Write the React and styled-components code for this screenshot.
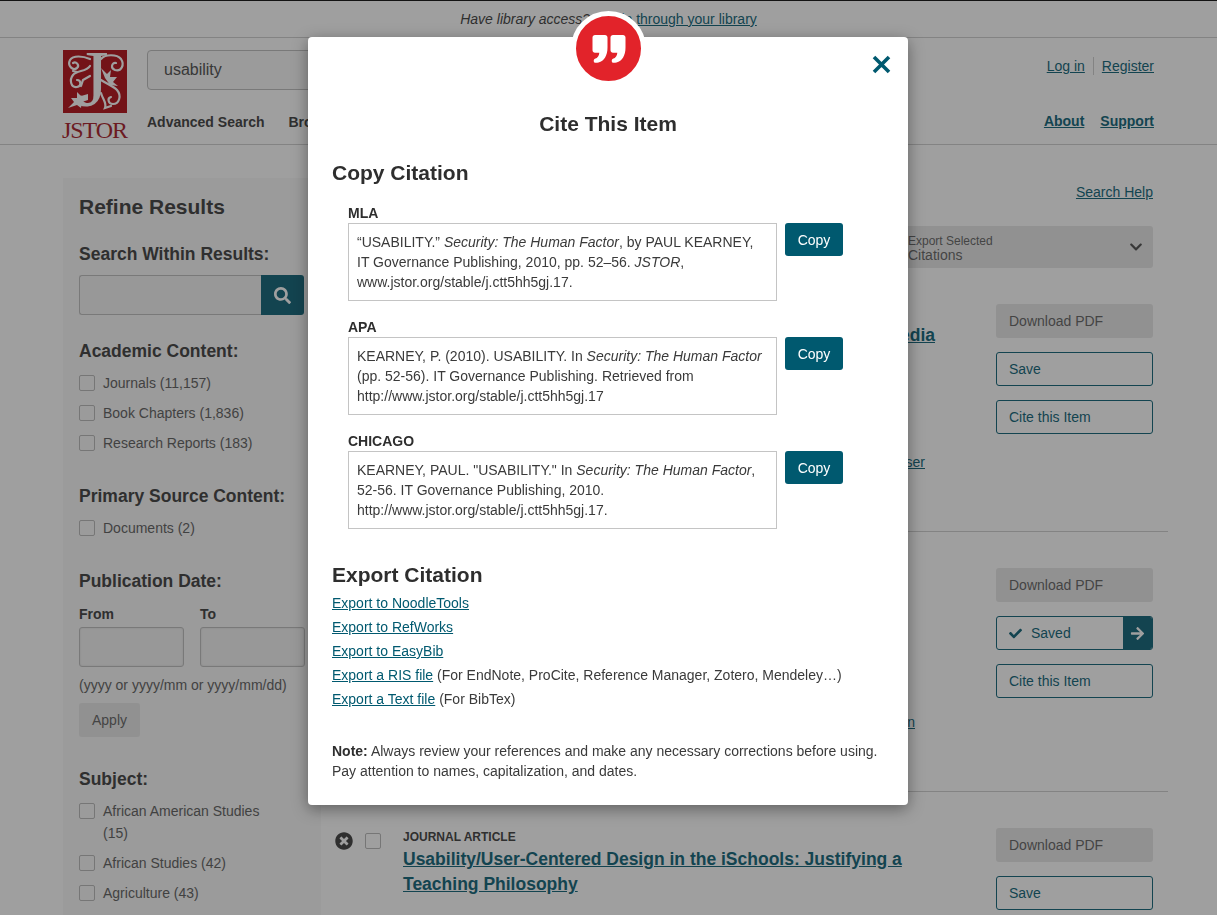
import styled, { createGlobalStyle } from 'styled-components'
import { FaCheck, FaArrowRight, FaTimesCircle, FaChevronDown, FaSearch } from 'react-icons/fa'

const teal = '#00596f'

const GlobalStyle = createGlobalStyle`
  html, body {
    margin: 0;
    height: 100%;
    overflow: hidden;
    background: #fff;
    font-family: "Liberation Sans", Arial, sans-serif;
    color: #333;
  }
  * {
    box-sizing: border-box;
  }
`

const Page = styled.div`
  height: 915px;
  overflow: hidden;
  border-top: 1px solid #000;
`

const Notice = styled.div`
  height: 37px;
  border-bottom: 1px solid #ccc;
  display: flex;
  align-items: center;
  justify-content: center;
  font-size: 14px;
  font-style: italic;
  gap: 4px;
`

const Link = styled.a`
  color: ${teal};
  text-decoration: underline;
  font-style: normal;
  font-size: 14px;
`

const Header = styled.header`
  height: 107px;
  border-bottom: 1px solid #ccc;
  padding: 12px 63px 0 63px;
  display: flex;
`

const LogoBlock = styled.div`
  width: 84px;
  flex: none;
  display: flex;
  flex-direction: column;
`

const LogoWord = styled.div`
  font-family: "Liberation Serif", serif;
  font-size: 24px;
  line-height: 26px;
  letter-spacing: -1.1px;
  color: #a3101a;
  width: 65px;
  margin: 4px 0 0 -1px;
  text-align: center;
  white-space: nowrap;
`

const HeaderCenter = styled.div`
  flex: 1;
  display: flex;
  flex-direction: column;
`

const SearchBox = styled.div`
  width: 500px;
  height: 40px;
  border: 1px solid #bbb;
  border-radius: 4px;
  background: #f7f7f7;
  padding: 0 16px;
  display: flex;
  align-items: center;
  font-size: 16px;
  color: #444;
`

const MainNav = styled.nav`
  display: flex;
  gap: 24px;
  margin-top: 23px;
  font-size: 14px;
  font-weight: 700;
  line-height: 18px;
`

const HeaderRight = styled.div`
  display: flex;
  flex-direction: column;
  align-items: flex-end;
  padding-top: 7px;
`

const Account = styled.div`
  display: flex;
  align-items: center;
  height: 18px;
`

const AccountDivider = styled.span`
  width: 1px;
  height: 18px;
  background: #ccc;
  margin: 0 8px;
`

const Support = styled.div`
  display: flex;
  gap: 16px;
  margin-top: 37px;
  font-weight: 700;
  line-height: 18px;
`

const BoldLink = styled(Link)`
  font-weight: 700;
`

const Main = styled.main`
  display: flex;
  padding: 33px 49px 0 63px;
`

const Sidebar = styled.aside`
  width: 258px;
  height: 740px;
  flex: none;
  background: #f7f7f7;
  padding: 16px 16px 0;
`

const RefineTitle = styled.h2`
  margin: 0 0 25px;
  font-size: 21px;
  line-height: 26px;
  font-weight: 700;
`

const FacetTitle = styled.h3`
  margin: 0 0 ${(p) => p.$gap ?? 12}px;
  font-size: 17.5px;
  line-height: 18px;
  font-weight: 700;
`

const SearchWithin = styled.div`
  display: flex;
  width: 225px;
  height: 40px;
  margin-bottom: 27px;
`

const SearchField = styled.div`
  flex: 1;
  background: #f3f3f3;
  border: 1px solid #bbb;
  border-right: 0;
  border-radius: 3px 0 0 3px;
`

const SearchButton = styled.div`
  width: 43px;
  background: ${teal};
  color: #fff;
  border-radius: 0 3px 3px 0;
  display: flex;
  align-items: center;
  justify-content: center;
  font-size: 17px;
`

const FacetList = styled.div`
  margin-bottom: 33px;
`

const FacetItem = styled.label`
  display: flex;
  gap: 8px;
  font-size: 14px;
  line-height: 22px;
  color: #555;
  margin-bottom: 8px;
`

const FacetLabel = styled.span`
  max-width: 175px;
`

const Check = styled.span`
  display: block;
  flex: none;
  width: 16px;
  height: 16px;
  margin-top: 3px;
  background: transparent;
  border: 1px solid #b4b4b4;
  border-radius: 2px;
`

const DateRow = styled.div`
  display: flex;
  gap: 16px;
`

const DateCol = styled.div`
  width: 105px;
`

const DateLabel = styled.div`
  font-size: 14px;
  font-weight: 700;
  line-height: 18px;
  margin-bottom: 4px;
`

const DateInput = styled.div`
  height: 40px;
  background: #f3f3f3;
  border: 1px solid #bbb;
  border-radius: 3px;
  box-shadow: inset 0 0 2px rgba(0, 0, 0, 0.15);
`

const DateHint = styled.div`
  font-size: 14px;
  line-height: 18px;
  color: #555;
  margin: 9px 0;
`

const GreyButton = styled.div`
  height: 34px;
  background: #e6e6e6;
  border-radius: 3px;
  font-size: 14px;
  color: #5a5a5a;
  display: flex;
  align-items: center;
  padding: 0 13px;
  width: ${(p) => (p.$wide ? '157px' : 'auto')};
  align-self: flex-start;
`

const ApplyWrap = styled.div`
  display: flex;
  margin-bottom: 33px;
`

const Results = styled.section`
  flex: 1;
  display: flex;
  flex-direction: column;
`

const ResultsTop = styled.div`
  height: 90px;
  padding-right: 15px;
  display: flex;
  flex-direction: column;
  align-items: flex-end;
`

const HelpLink = styled(Link)`
  line-height: 18px;
  margin-top: 5px;
`

const ExportSelect = styled.div`
  width: 253px;
  height: 42px;
  margin-top: 25px;
  background: #e6e6e6;
  border-radius: 3px;
  padding: 9px 10px 0 8px;
  color: #5a5a5a;
  display: flex;
  justify-content: space-between;
`

const ExportText = styled.div`
  font-size: 12px;
  line-height: 13px;
  span {
    display: block;
    font-size: 14px;
    line-height: 14px;
  }
`

const ExportChevron = styled(FaChevronDown)`
  font-size: 14px;
  margin-top: 5px;
  color: #444;
`

const Row = styled.article`
  height: 260px;
  border-bottom: 1px solid #ccc;
  padding: 36px 15px 0;
  display: flex;
  flex: none;
  &:nth-of-type(1) {
    height: 264px;
  }
  &:last-child {
    border-bottom: 0;
  }
`

const RowControls = styled.div`
  width: 52px;
  flex: none;
  display: flex;
  align-items: flex-start;
  gap: 12px;
  padding-top: 4px;
`

const RemoveIcon = styled(FaTimesCircle)`
  font-size: 18px;
  color: #333;
  flex: none;
  margin-left: -1px;
`

const RowCheck = styled(Check)`
  margin-top: 1px;
`

const RowBody = styled.div`
  width: 560px;
  flex: none;
`

const RowType = styled.div`
  font-size: 12px;
  font-weight: 700;
  line-height: 16px;
  margin: 1px 0 2px 15px;
  color: #333;
`

const RowTitle = styled.a`
  display: block;
  width: ${(p) => (p.$endAligned ? '532px' : 'auto')};
  text-align: ${(p) => (p.$endAligned ? 'right' : 'left')};
  color: ${teal};
  font-size: 17.5px;
  font-weight: 700;
  line-height: 25px;
  text-decoration: underline;
  margin-left: 15px;
`

const RowLink = styled(Link)`
  display: block;
  text-align: right;
  line-height: 18px;
  margin-top: ${(p) => p.$top}px;
  margin-right: ${(p) => p.$right}px;
`

const RowActions = styled.div`
  width: 157px;
  flex: none;
  margin-left: auto;
  display: flex;
  flex-direction: column;
  gap: 14px;
`

const OutlineButton = styled.div`
  height: 34px;
  border: 1px solid ${teal};
  border-radius: 3px;
  color: ${teal};
  background: #fff;
  font-size: 14px;
  display: flex;
  align-items: center;
  padding-left: 12px;
  overflow: hidden;
`

const SavedCheck = styled(FaCheck)`
  font-size: 13px;
  margin-right: 9px;
`

const SavedArrow = styled.span`
  margin-left: auto;
  width: 29px;
  height: 100%;
  background: ${teal};
  color: #fff;
  display: flex;
  align-items: center;
  justify-content: center;
  font-size: 15px;
`

const Overlay = styled.div`
  position: fixed;
  inset: 0;
  background: rgba(42, 42, 42, 0.45);
`

const Modal = styled.div`
  position: fixed;
  left: 308px;
  top: 37px;
  width: 600px;
  height: 768px;
  background: #fff;
  border-radius: 4px;
  box-shadow: 0 4px 16px rgba(0, 0, 0, 0.4);
  padding: 74px 24px 0;
`

const QuoteBadge = styled.div`
  position: absolute;
  left: 263px;
  top: -26px;
  width: 75px;
  height: 75px;
  border-radius: 50%;
  background: #e2232a;
  border: 5px solid #fff;
  display: flex;
  align-items: center;
  justify-content: center;
`

const CloseButton = styled.svg`
  position: absolute;
  right: 17px;
  top: 18px;
  width: 19px;
  height: 19px;
`

const ModalTitle = styled.h2`
  margin: 0 0 23px;
  text-align: center;
  font-size: 21px;
  line-height: 26px;
  font-weight: 700;
  color: #2e2e2e;
`

const SectionTitle = styled.h3`
  margin: 0;
  font-size: 21px;
  line-height: 26px;
  font-weight: 700;
  color: #2e2e2e;
`

const CitationList = styled.div`
  padding: 18px 0 16px 16px;
`

const Citation = styled.div`
  margin-bottom: 17px;
`

const CitationLabel = styled.div`
  font-size: 14px;
  font-weight: 700;
  line-height: 18px;
  margin-bottom: 1px;
  color: #2e2e2e;
`

const CitationRow = styled.div`
  display: flex;
  align-items: flex-start;
  gap: 8px;
`

const CitationText = styled.div`
  width: 429px;
  height: 78px;
  border: 1px solid #c4c4c4;
  padding: 8px;
  font-size: 14px;
  line-height: 20px;
  color: #3a3a3a;
`

const CopyButton = styled.button`
  width: 58px;
  height: 33px;
  border: 0;
  border-radius: 3px;
  background: ${teal};
  color: #fff;
  font-family: inherit;
  font-size: 14px;
  padding: 0;
`

const ExportList = styled.ul`
  list-style: none;
  margin: 0;
  padding: 3px 0 0;
  font-size: 14px;
  line-height: 24px;
  color: #3a3a3a;
`

const Note = styled.p`
  margin: 30px 0 0;
  font-size: 14px;
  line-height: 20px;
  color: #3a3a3a;
  b {
    color: #2e2e2e;
  }
`

function JstorLogo() {
  return (
    <svg width="64" height="63" viewBox="0 0 64 63">
      <rect width="64" height="63" fill="#b0000a" />
      <text x="30" y="56" fontFamily="Liberation Serif, serif" fontSize="80" textAnchor="middle" fill="#fff">J</text>
      <g fill="none" stroke="#fff" strokeWidth="2.2" strokeLinecap="round">
        <path d="M27 9C20 6 10 5 7 10c-3 6 3 11 7 8 3-3-1-7-4-5" />
        <path d="M27 16c-4 6-13 4-17 9-4 5-2 13 4 12 5-1 4-7 0-7" />
        <path d="M14 22l-4-1M27 26l-7 4-2 6" />
        <path d="M38 9c4-5 16-5 20 0 4 6 0 13-6 11-5-2-3-8 1-7" />
        <path d="M38 30c6 4 12 6 16 10 5 6 2 14-4 14-5 0-6-6-2-7" />
        <path d="M38 43c2 7 6 10 4 15l6-2" />
      </g>
      <g fill="#fff">
        <path d="M25 44l-7 2-4-4v6H8l3 4-6 6 9-3 4 3 1-6 6-2z" />
        <path d="M38 18l6 6 4-4-1 7h7l-4 5 5 4-8-1-5-7z" />
      </g>
    </svg>
  )
}

function QuoteIcon() {
  return (
    <svg width="34" height="30" viewBox="0 0 34 30" fill="#fff">
      <path d="M3 1h10c1.400 0 2.500 1.100 2.500 2.500v10c0 8-3.300 13.500-9 15-1.200.3-3 .5-3.800.2-1.300-.5-1.400-3.200.2-3.900 2.800-.8 4.300-3 4.400-6H3c-1.400 0-2.500-1.100-2.500-2.500V3.500C.5 2.100 1.600 1 3 1z" />
      <path d="M21 1h10c1.400 0 2.500 1.100 2.500 2.500v10c0 8-3.300 13.500-9 15-1.200.3-3 .5-3.800.2-1.300-.5-1.400-3.200.2-3.900 2.800-.8 4.300-3 4.400-6H21c-1.400 0-2.500-1.100-2.500-2.500V3.500C18.500 2.100 19.600 1 21 1z" />
    </svg>
  )
}

function Facet({ label }) {
  return (
    <FacetItem>
      <Check />
      <FacetLabel>{label}</FacetLabel>
    </FacetItem>
  )
}

function ResultRow({ type, title, endAligned, link, linkTop, linkRight, saved }) {
  return (
    <Row>
      <RowControls>
        <RemoveIcon />
        <RowCheck />
      </RowControls>
      <RowBody>
        <RowType>{type}</RowType>
        <RowTitle href="#" $endAligned={endAligned}>{title}</RowTitle>
        {link && (
          <RowLink href="#" $top={linkTop} $right={linkRight}>
            {link}
          </RowLink>
        )}
      </RowBody>
      <RowActions>
        <GreyButton $wide>Download PDF</GreyButton>
        {saved ? (
          <OutlineButton>
            <SavedCheck />
            Saved
            <SavedArrow>
              <FaArrowRight />
            </SavedArrow>
          </OutlineButton>
        ) : (
          <OutlineButton>Save</OutlineButton>
        )}
        <OutlineButton>Cite this Item</OutlineButton>
      </RowActions>
    </Row>
  )
}

export default function App() {
  return (
    <>
      <GlobalStyle />
      <Page>
        <Notice>
          <span>Have library access?</span>
          <Link href="#">Log in through your library</Link>
        </Notice>
        <Header>
          <LogoBlock>
            <JstorLogo />
            <LogoWord>JSTOR</LogoWord>
          </LogoBlock>
          <HeaderCenter>
            <SearchBox>usability</SearchBox>
            <MainNav>
              <span>Advanced Search</span>
              <span>Browse</span>
            </MainNav>
          </HeaderCenter>
          <HeaderRight>
            <Account>
              <Link href="#">Log in</Link>
              <AccountDivider />
              <Link href="#">Register</Link>
            </Account>
            <Support>
              <BoldLink href="#">About</BoldLink>
              <BoldLink href="#">Support</BoldLink>
            </Support>
          </HeaderRight>
        </Header>
        <Main>
          <Sidebar>
            <RefineTitle>Refine Results</RefineTitle>
            <FacetTitle>Search Within Results:</FacetTitle>
            <SearchWithin>
              <SearchField />
              <SearchButton>
                <FaSearch />
              </SearchButton>
            </SearchWithin>
            <FacetTitle>Academic Content:</FacetTitle>
            <FacetList>
              <Facet label="Journals (11,157)" />
              <Facet label="Book Chapters (1,836)" />
              <Facet label="Research Reports (183)" />
            </FacetList>
            <FacetTitle>Primary Source Content:</FacetTitle>
            <FacetList>
              <Facet label="Documents (2)" />
            </FacetList>
            <FacetTitle $gap={15}>Publication Date:</FacetTitle>
            <DateRow>
              <DateCol>
                <DateLabel>From</DateLabel>
                <DateInput />
              </DateCol>
              <DateCol>
                <DateLabel>To</DateLabel>
                <DateInput />
              </DateCol>
            </DateRow>
            <DateHint>(yyyy or yyyy/mm or yyyy/mm/dd)</DateHint>
            <ApplyWrap>
              <GreyButton>Apply</GreyButton>
            </ApplyWrap>
            <FacetTitle>Subject:</FacetTitle>
            <FacetList>
              <Facet label="African American Studies (15)" />
              <Facet label="African Studies (42)" />
              <Facet label="Agriculture (43)" />
            </FacetList>
          </Sidebar>
          <Results>
            <ResultsTop>
              <HelpLink href="#">Search Help</HelpLink>
              <ExportSelect>
                <ExportText>
                  Export Selected
                  <span>Citations</span>
                </ExportText>
                <ExportChevron />
              </ExportSelect>
            </ResultsTop>
            <ResultRow
              type="BOOK CHAPTER"
              title="Usability Heuristics in the Design of Participatory Media"
              endAligned
              link="Open in the browser"
              linkTop={105}
              linkRight={23}
            />
            <ResultRow
              type="JOURNAL ARTICLE"
              title="Usability in Libraries"
              link="Read the publication"
              linkTop={101}
              linkRight={33}
              saved
            />
            <ResultRow
              type="JOURNAL ARTICLE"
              title="Usability/User-Centered Design in the iSchools: Justifying a Teaching Philosophy"
            />
          </Results>
        </Main>
      </Page>
      <Overlay />
      <Modal>
        <QuoteBadge>
          <QuoteIcon />
        </QuoteBadge>
        <CloseButton viewBox="0 0 19 19">
          <path d="M2 2l15 15M17 2L2 17" stroke={teal} strokeWidth="3.6" fill="none" />
        </CloseButton>
        <ModalTitle>Cite This Item</ModalTitle>
        <SectionTitle>Copy Citation</SectionTitle>
        <CitationList>
          <Citation>
            <CitationLabel>MLA</CitationLabel>
            <CitationRow>
              <CitationText>
                “USABILITY.” <i>Security: The Human Factor</i>, by PAUL KEARNEY, IT Governance Publishing, 2010, pp. 52–56. <i>JSTOR</i>, www.jstor.org/stable/j.ctt5hh5gj.17.
              </CitationText>
              <CopyButton>Copy</CopyButton>
            </CitationRow>
          </Citation>
          <Citation>
            <CitationLabel>APA</CitationLabel>
            <CitationRow>
              <CitationText>
                KEARNEY, P. (2010). USABILITY. In <i>Security: The Human Factor</i> (pp. 52-56). IT Governance Publishing. Retrieved from http://www.jstor.org/stable/j.ctt5hh5gj.17
              </CitationText>
              <CopyButton>Copy</CopyButton>
            </CitationRow>
          </Citation>
          <Citation>
            <CitationLabel>CHICAGO</CitationLabel>
            <CitationRow>
              <CitationText>
                KEARNEY, PAUL. "USABILITY." In <i>Security: The Human Factor</i>, 52-56. IT Governance Publishing, 2010. http://www.jstor.org/stable/j.ctt5hh5gj.17.
              </CitationText>
              <CopyButton>Copy</CopyButton>
            </CitationRow>
          </Citation>
        </CitationList>
        <SectionTitle>Export Citation</SectionTitle>
        <ExportList>
          <li><Link href="#">Export to NoodleTools</Link></li>
          <li><Link href="#">Export to RefWorks</Link></li>
          <li><Link href="#">Export to EasyBib</Link></li>
          <li><Link href="#">Export a RIS file</Link> (For EndNote, ProCite, Reference Manager, Zotero, Mendeley…)</li>
          <li><Link href="#">Export a Text file</Link> (For BibTex)</li>
        </ExportList>
        <Note>
          <b>Note:</b> Always review your references and make any necessary corrections before using. Pay attention to names, capitalization, and dates.
        </Note>
      </Modal>
    </>
  )
}
